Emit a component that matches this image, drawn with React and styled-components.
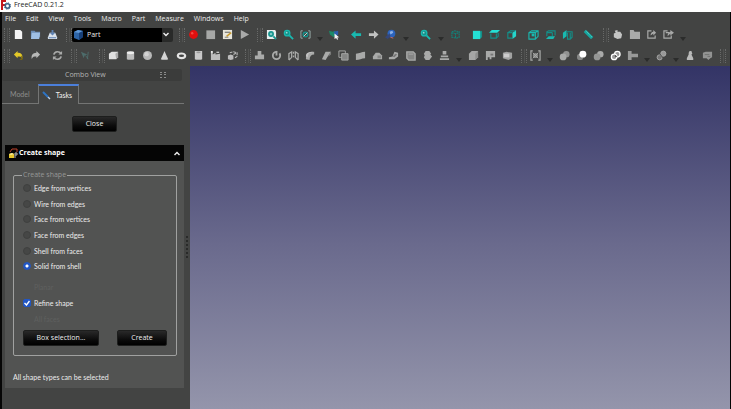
import React, { useState } from "react";
import styled, { createGlobalStyle, css } from "styled-components";

const Global = createGlobalStyle`
  * { box-sizing: border-box; }
  html, body, #root { height: 100%; }
  body {
    margin: 0;
    overflow: hidden;
    background: #000;
    color: #ececec;
    font-family: "Open Sans", "Noto Sans", sans-serif;
    font-size: 7px;
    line-height: 10px;
  }
  button, select, input { font: inherit; color: inherit; margin: 0; }
`;

const panelFont = css`
  font-family: Lato, "Open Sans", sans-serif;
`;

const Window = styled.div`
  display: flex;
  flex-direction: column;
  height: 100vh;
`;

const TitleBar = styled.header`
  display: flex;
  align-items: center;
  gap: 3px;
  height: 12px;
  background: #fff;
  color: #222;
  padding-bottom: 2px;
`;

const Frame = styled.div`
  flex: 1;
  min-height: 0;
  display: flex;
  flex-direction: column;
  border-left: 2px solid #060606;
  border-right: 1px solid #060606;
  background: #434443;
`;

const MenuBar = styled.nav`
  display: flex;
  gap: 10px;
  padding: 1px 3px 0;
  height: 12px;
`;

const MenuItem = styled.button`
  border: 0;
  padding: 0;
  background: none;
  line-height: 12px;
`;

const ToolBar = styled.div`
  display: flex;
  align-items: center;
  height: 21px;
  padding-left: 2px;
`;

const Handle = styled.span`
  flex: none;
  width: 6px;
  height: 14px;
  border: 0 dotted #686968;
  border-width: 0 1px;
  background: linear-gradient(#505150, #505150) center / 1px 100% no-repeat;
  background-clip: content-box;
  margin: 0;
`;

const Gap = styled.span`
  flex: none;
  width: ${(p) => p.$w}px;
`;

const Tool = styled.button`
  flex: none;
  display: grid;
  place-items: center;
  width: ${(p) => (p.$tight ? 16 : 17)}px;
  height: 17px;
  padding: 0;
  border: 0;
  background: none;
  svg { width: 11px; height: 11px; display: block; }
`;

const DropArrow = styled.button`
  flex: none;
  display: grid;
  place-items: end center;
  width: 12px;
  height: 12px;
  padding: 0;
  border: 0;
  background: none;
  svg { width: 6px; height: 4px; display: block; }
`;

const Workbench = styled.label`
  flex: none;
  display: flex;
  align-items: center;
  width: 101px;
  height: 14px;
  padding: 0 4px 0 2px;
  background: linear-gradient(90deg, #000 90px, #292a29 90px);
  border-radius: 2px;
  svg { flex: none; width: 10px; height: 10px; }
  svg:last-child { width: 6px; height: 5px; }
`;

const WorkbenchSelect = styled.select`
  flex: 1;
  min-width: 0;
  height: 14px;
  appearance: none;
  border: 0;
  padding: 0 3px;
  background: none;
  outline: none;
`;

const Main = styled.main`
  flex: 1;
  min-height: 0;
  display: flex;
`;

const SidePanel = styled.aside`
  flex: none;
  width: 182px;
  padding-top: 3px;
`;

const DockTitle = styled.div`
  display: flex;
  align-items: center;
  height: 12px;
  margin-right: 2px;
  padding: 0 16px 0 63px;
  justify-content: space-between;
  background: #3b3c3b;
  border-radius: 2px;
  color: #b4b5b4;
  svg { width: 6px; height: 6px; }
`;

const Tabs = styled.div`
  display: flex;
  height: 20px;
  margin-top: 3px;
  border-bottom: 1px solid #747574;
`;

const Tab = styled.button`
  && { ${panelFont} }
  display: flex;
  align-items: center;
  height: 19px;
  padding: 0 8px;
  border: 0;
  background: none;
  color: #8d8e8d;
  ${(p) =>
    p.$active &&
    css`
      height: 20px;
      padding: 0 6px 0 3px;
      gap: 5px;
      color: #f2f2f2;
      background: #434443;
      border: 1px solid #747574;
      border-top: 2px solid #4b7fdb;
      border-bottom: 0;
    `}
  svg { width: 9px; height: 9px; }
`;

const Button = styled.button`
  height: 16px;
  width: ${(p) => p.$width}px;
  padding: 0;
  border: 1px solid #1d1e1d;
  border-radius: 2px;
  background: linear-gradient(#292929, #0a0a0a 65%, #000);
  color: #efefef;
`;

const CloseRow = styled.div`
  display: flex;
  justify-content: center;
  padding: 12px 0 13px 3px;
`;

const TaskBox = styled.section`
  margin-left: 3px;
  background: #525352;
`;

const TaskHeader = styled.button`
  display: flex;
  align-items: center;
  gap: 1px;
  width: 100%;
  height: 16px;
  padding: 0 4px 0 3px;
  border: 0;
  background: #050505;
  color: #fff;
  && { font-weight: 700; }
  svg { width: 10px; height: 11px; }
  svg:last-child { width: 6px; height: 5px; margin-left: auto; }
`;

const TaskBody = styled.div`
  padding: 9px 7px 6px 8px;
`;

const Group = styled.fieldset`
  min-width: 0;
  margin: 0;
  padding: 0 8px 9px;
  border: 1px solid #a0a1a0;
  border-radius: 2px;
`;

const Legend = styled.legend`
  padding: 0 1px;
  color: #969796;
`;

const RadioList = styled.div`
  display: flex;
  flex-direction: column;
  justify-content: space-between;
  height: 94px;
`;

const Choice = styled.label`
  ${panelFont}
  display: flex;
  align-items: center;
  gap: 3px;
  height: 16px;
  padding-left: 1px;
`;

const inputBase = css`
  appearance: none;
  flex: none;
  width: 8px;
  height: 8px;
  background: #464746;
  border: 1px solid #3f403f;
`;

const Radio = styled.input.attrs({ type: "radio" })`
  ${inputBase}
  border-radius: 50%;
  &:checked {
    border-color: #2256c4;
    background: radial-gradient(circle, #fff 0 1px, #2256c4 2px);
  }
`;

const Check = styled.input.attrs({ type: "checkbox" })`
  ${inputBase}
  grid-area: 1 / 1;
  border-radius: 2px;
  &:checked {
    border-color: #2256c4;
    background: #2256c4;
  }
`;

const CheckMark = styled.span`
  display: grid;
  place-items: center;
  svg { grid-area: 1 / 1; width: 6px; height: 6px; pointer-events: none; }
`;

const Faint = styled.div`
  ${panelFont}
  padding: ${(p) => (p.$spaced ? "5px" : "0")} 0 0 12px;
  line-height: 16px;
  color: #5f605f;
`;

const ButtonRow = styled.div`
  display: flex;
  justify-content: space-between;
  margin: 3px 1px 0;
`;

const Status = styled.p`
  ${panelFont}
  margin: 16px 0 0;
`;

const Splitter = styled.div`
  flex: none;
  width: 6px;
  display: grid;
  place-items: center;
  svg { width: 3px; height: 24px; margin-top: 20px; }
`;

const Viewport = styled.section`
  flex: 1;
  min-width: 0;
  background: linear-gradient(#333466, #6a6a8d 52%, #9495ab);
`;

const T = "#18b9b0";
const G = "#a9aaa9";

const art = {
  page: <path fill="#f4f4f4" d="M2 1h6l2 2v8H2z" />,
  open: <><path fill="#6c8db5" d="M1 2h4l1 1h5v6H1z" /><path fill="#9fbfe4" d="M2 4h9l-1 7H1z" /></>,
  save: <><path fill="#dbe3ec" d="M3 4h6l2 5v2H1V9z" /><path fill="#5f83b4" d="M5 1h2v3h2L6 7 3 4h2zM2 9h8v1H2z" /></>,
  record: <><circle cx="6" cy="6" r="4.8" fill="#e00f0f" /><circle cx="4.6" cy="4.6" r="1.3" fill="#f14a42" /></>,
  stop: <path fill="#a7a8a7" d="M1.5 1.5h9.500v9.500h-9.500z" />,
  macro: <><path fill="#e8e6dc" d="M1 1h10v10H1z" /><path fill="#555" d="M3 3h6v1H3z" /><path stroke="#c99a2c" strokeWidth="1.6" d="M5 8l5-4" /><path stroke="#777" d="M3 9h4" /></>,
  play: <path fill={G} d="M2 1l9 5-9 5z" />,
  fitAll: <><path fill="#e8eeee" d="M1 1h9l1 2v8H1z" /><circle cx="5.500" cy="5.500" r="2.300" fill="#7fc9c5" stroke="#15958f" strokeWidth="1.8" /><path stroke="#15958f" strokeWidth="2" d="M8 8l3 3" /></>,
  zoom: <><circle cx="4.5" cy="4.5" r="3" fill="#168f8a" stroke={T} strokeWidth="1.4" /><path stroke={T} strokeWidth="2" d="M7 7l4 4" /><circle cx="4" cy="4" r="1" fill="#91dad5" /></>,
  draw: <><path fill="none" stroke="#9aaead" d="M3 2H1v8h2M9 2h2v8H9" /><circle cx="6" cy="6" r="2.500" fill="none" stroke="#168f8a" strokeWidth="1.500" /><path stroke="#d5dada" d="M4 8l4-4" /></>,
  select: <><path fill="#1b8a68" d="M0 2l4 1 3-1v4L5 9 1 6z" /><path fill="#2c5cad" d="M5 3l5-1v4L7 8z" /><path fill="#f1f1f1" d="M6 5l5 4-2 .2 1 2-1.2.5-1-2L6 11z" /></>,
  left: <path fill={T} d="M0 6l5-4.500v3h6v3H5v3z" />,
  right: <path fill="#c1c2c1" d="M11.500 6l-5-4.500v3H1v3h5.500v3z" />,
  link: <><circle cx="7" cy="5" r="4.300" fill="#2b63bd" /><path fill="#8bb0e8" d="M5 3l3-1 1 2-3 2z" /><path fill="#34477c" d="M0 9l5-4 1 3-3 3z" /><path stroke="#d36a61" d="M6 9l3 1" /></>,
  iso: <path fill="none" stroke="#138079" strokeWidth="1.2" strokeDasharray="2 .6" d="M2 3l3-1 5 1v6l-3 1-5-1zM2 4l4 1 4-1M6 5v5" />,
  front: <><path fill="#138f89" d="M8 3l3-1v7l-3 2z" /><path fill="#24e0d5" d="M1 2h8v9H1z" /></>,
  top: <><path fill="#24e0d5" d="M0 4l3-3h9L9 4z" /><path fill="none" stroke="#138f89" strokeWidth="1.2" d="M2 5v5h6V5M8 10l2-2V4" /></>,
  rightCube: <><path fill="#24d5cb" d="M7 4l4-3v7l-4 3z" /><path fill="none" stroke="#138f89" strokeWidth="1.2" d="M7 4H2v6h5M2 4l3-2h5" /></>,
  rear: <><path fill="none" stroke={T} strokeWidth="1.2" d="M1 4l3-2h7v6l-3 3H1zM1 4h7v7M8 4l3-2" /><path fill={T} d="M4 5h3v3H4z" /></>,
  bottom: <><path fill="none" stroke="#138f89" strokeWidth="1.2" d="M2 8V3l2-1h7v5M8 4v4M2 4h6" /><path fill={T} d="M1 11l3-3h7l-2 3z" /></>,
  leftCube: <><path fill={T} d="M1 4l4-3v7l-4 3z" /><path fill="none" stroke="#138f89" strokeWidth="1.2" d="M5 3h6v6l-2 2H6V4M9 4v6" /></>,
  measure: <><path stroke="#17a69f" strokeWidth="3.500" d="M2 2l8 8" /><path stroke="#6de0d8" strokeWidth="1" d="M3 2l7 7" strokeDasharray="1 1" /></>,
  part: <path fill="#c4c5c4" d="M3 2l3-1v2h3l2 3-1 4-4 1-4-2V5l2-1z" />,
  folder: <path fill={G} d="M1 1h4l1 2h6v8H1z" />,
  exportBox: <><path fill="none" stroke={G} strokeWidth="1.3" d="M6 2H2v8h8V7" /><path fill={G} d="M8 1l3 3-3 3V5L5 7c0-2 1-4 3-4z" /></>,
  exportAll: <><path fill="none" stroke={G} strokeWidth="1.3" d="M5 2H1v8h8V7M3 4h4" /><path fill={G} d="M8 1l4 3-4 3V5L5 8c0-3 1-4 3-5z" /></>,
  undo: <><path fill="#e3c828" d="M1 5l4-4v2c4 0 6 2 5 7C9 7 8 7 5 7v2z" /><path fill="#756612" d="M9 6l2 2-1 3H7l2-2z" /></>,
  redo: <path fill="#b7b8b7" d="M11 5L7 1v2C3 3 1 6 2 10c1-3 2-3 5-3v2z" />,
  refresh: <><path fill="none" stroke={G} strokeWidth="1.8" d="M2 5c1-4 6-4 8-1M10 7c-1 4-6 4-8 1" /><path fill={G} d="M11 1v4H7zM1 11V7h4z" /></>,
  pointer: <><path fill="#4d6c6b" d="M1 2l7 3-3 1-1 3z" /><path stroke="#4d6c6b" d="M6 6l3 4M9 2l-1 8" /></>,
  box: <><path fill="#e0e0e0" d="M1 4l3-2h7v6L9 10H1z" /><path fill="#aaa" d="M8 4l3-2v6l-2 2z" /></>,
  cylinder: <><path fill="#bcbcbc" d="M2 3h8v7c-1 1-7 1-8 0z" /><ellipse cx="6" cy="3" rx="4" ry="1.6" fill="#eee" /></>,
  sphere: <><circle cx="6" cy="6" r="4.9" fill="#b9b9b9" /><circle cx="5" cy="4.5" r="2.4" fill="#d4d4d4" /></>,
  cone: <path fill="#d4d4d4" d="M6 1l4 9c-1 1-7 1-8 0z" />,
  torus: <ellipse cx="6" cy="6.3" rx="4" ry="2.5" fill="none" stroke="#e4e4e4" strokeWidth="2.400" />,
  tube: <><path fill="#c8c8c8" d="M2 1h8v9c-1 1-7 1-8 0z" /><ellipse cx="6" cy="2.500" rx="2.4" ry="1" fill="#999" /></>,
  primitives: <><path fill="#bcbcbc" d="M1 11V2h2v3l3-2v2l5-1v7z" /><path fill="#eee" d="M1 1h2v2H1zM7 2h3v1H7z" /></>,
  builder: <><path fill="#bcbcbc" d="M1 6l3-1 3 1v4l-3 1-3-1z" /><path fill="none" stroke="#bcbcbc" strokeWidth="1.2" strokeDasharray="3 1" d="M3 3l4-1 4 1v4l-3 2M7 5l4-2" /></>,
  extrude: <path fill={G} d="M4 1h4v4h3v5H1V6h3z" />,
  revolve: <><circle cx="6" cy="6" r="4" fill="none" stroke={G} strokeWidth="2" strokeDasharray="19 3" /><path fill={G} d="M5 1h2v5H5z" /></>,
  mirror: <path fill="none" stroke={G} strokeWidth="1.4" d="M1 11V4l3-2v6l-3 3M11 11V4L8 2v6l3 3M6 2v2M6 6v2" />,
  fillet: <><path fill={G} d="M1 10c0-5 3-8 9-8v3C7 5 5 7 5 11z" /><path fill="#c3c3c3" d="M1 7c0-4 3-5 8-5L7 3C4 3 3 5 3 8z" /></>,
  chamfer: <><path fill={G} d="M1 10l4-8h6L8 6l-3 5z" /><path fill="#7b7c7b" d="M8 6l3-4v3l-3 2z" /></>,
  faceOf: <><path fill="none" stroke={G} d="M1 1h7v7H1z" /><path fill="#858685" stroke={G} d="M4 4h7v7H4z" /></>,
  ruled: <path fill={G} d="M1 4c4 0 6-2 10-2v7c-4 0-6 2-10 2z" />,
  loft: <><path fill={G} d="M1 10V7l3-4h4l3 3v4z" /><path fill="#858685" d="M6 6h4v3H6z" /></>,
  sweep: <><path fill={G} d="M1 8l4-1 2-5 4 1v4L7 10H1z" /><path fill="#777" d="M5 7l3-3 2 1-3 3z" /></>,
  section: <><path fill="#858685" stroke={G} strokeWidth="1.5" d="M2 2h7l2 2v7H4L2 9z" /><path fill={G} d="M4 4h5v1H4z" /></>,
  cross: <path fill={G} d="M4 1h4l2 3-1 1 2 2-3 4H4L2 8l1-2-1-2z" />,
  offset: <path fill={G} d="M4 1h4v4H4zM2 6h8v2H2zM1 9h10v2H1z" />,
  cube: <><path fill="#a5a6a5" d="M1 4l3-3h7v7l-3 3H1z" /><path fill="#8c8d8c" d="M8 4l3-3v7l-3 3z" /></>,
  project: <><path fill={G} d="M1 1h10v7H7v2H5V8H3v3H1z" /><path fill="#777" d="M6 4h3v2H6z" /></>,
  color: <><path fill="#a1a2a1" d="M1 3l4-1 6 1v6l-4 2-6-2z" /><path fill="#ccc" d="M2 4h6v4H2z" /></>,
  compound: <><path fill="none" stroke={G} strokeWidth="1.3" d="M3 1H1v10h2M9 1h2v10H9" /><circle cx="6" cy="6" r="2.8" fill="#8a8b8a" /><path stroke={G} d="M3 3l6 6M9 3L3 9" /></>,
  boolA: <><circle cx="8" cy="4.5" r="3.5" fill="#929392" /><circle cx="4.5" cy="7.5" r="3.7" fill={G} /></>,
  boolB: <><circle cx="4.5" cy="7.5" r="3.5" fill="#858685" /><circle cx="7.5" cy="4.5" r="3.8" fill="#fff" /></>,
  boolC: <><circle cx="8" cy="4.5" r="3.5" fill={G} /><circle cx="4.5" cy="7.5" r="3.7" fill="#959695" /></>,
  boolD: <><circle cx="8" cy="4.5" r="3" fill="#999" stroke="#fff" strokeWidth="1.400" /><circle cx="4.5" cy="7.5" r="3" fill="#999" stroke="#fff" strokeWidth="1.400" /><path fill="#444" d="M5 5l3 2-2 1z" /></>,
  join: <path fill="#999a99" d="M1 1h4v3h7v4H5v3H1z" />,
  split: <><circle cx="8" cy="4" r="2.8" fill="#999" stroke={G} /><circle cx="4" cy="8" r="2.8" fill="#777" stroke={G} /><path stroke="#444" d="M4 4l4 5" /></>,
  check: <path fill="#b9bab9" d="M5 1h2l1 3-1 1 2 4v2H2V9l2-4V3z" />,
  defeature: <><path fill="#929392" d="M1 3l3-1h7v6l-2 1-2 2-2-2H1z" /><path fill="none" stroke="#6d6e6d" d="M3 5h5M6 7h3" /></>,
};

const Icon = ({ name }) => (
  <svg viewBox="0 0 12 12" fill="none" aria-hidden="true">{art[name]}</svg>
);

const Chevron = ({ up }) => (
  <svg viewBox="0 0 6 5" fill="none" aria-hidden="true">
    <path stroke="#f0f0f0" strokeWidth="1.4" d={up ? "M.5 4L3 1.5 5.5 4" : "M.5 1L3 3.5 5.5 1"} />
  </svg>
);

const PartIcon = () => (
  <svg viewBox="0 0 10 10" aria-hidden="true">
    <path fill="#2d64a6" d="M0 2l4-2 5 1v6L5 10 0 8z" />
    <path fill="#5f97d6" d="M0 2l4-2 5 1-4 2z" />
    <path fill="#173f78" d="M5 3l4-2v6l-4 3z" />
  </svg>
);

// "|" handle, "v" drop arrow, numbers are gaps, a trailing "-" marks a tight slot
const Tools = ({ items }) =>
  items.map((it, i) => {
    if (it === "|") return <Handle key={i} />;
    if (it === "v")
      return (
        <DropArrow key={i} aria-label="More">
          <svg viewBox="0 0 6 4"><path fill="#2b2c2b" d="M0 0h6L3 4z" /></svg>
        </DropArrow>
      );
    if (typeof it === "number") return <Gap key={i} $w={it} />;
    const name = it.replace("-", "");
    return (
      <Tool key={i} $tight={it.endsWith("-")} aria-label={name}>
        <Icon name={name} />
      </Tool>
    );
  });

const fileTools = ["|", "page", "open", "save", 5, "|"];
const viewTools = [
  6, "|", "record", "stop", "macro", "play", 4, "|", "fitAll", "zoom", "draw", "v", "select", 5,
  "left", "right", "link", 1, "v", 5, "zoom", 1, "v", "iso", 5, "front", "top", "rightCube", 5,
  "rear", "bottom", "leftCube", 4, "measure", 6, "|", "part", "folder", "exportBox", "exportAll", "v",
];
const partTools = [
  "|", "undo", "redo", 5, "refresh", 5, "|", "pointer", 5, "|", "box", "cylinder", "sphere", "cone",
  "torus", "tube", "primitives", "builder", 4, "|", "extrude", "revolve", "mirror", "fillet-",
  "chamfer", "faceOf", "ruled", "loft-", "sweep", "section", "cross", "offset", "v", "cube",
  "project", "color", 5, "|", "compound", "v", "boolA", "boolB", "boolC", "boolD", "join", "v",
  "split", "v", "check", "defeature", 4, "|",
];

const menus = ["File", "Edit", "View", "Tools", "Macro", "Part", "Measure", "Windows", "Help"];
const shapes = [
  "Edge from vertices",
  "Wire from edges",
  "Face from vertices",
  "Face from edges",
  "Shell from faces",
  "Solid from shell",
];

export default function App() {
  const [shape, setShape] = useState("Solid from shell");
  const [refine, setRefine] = useState(true);
  return (
    <Window>
      <Global />
      <TitleBar>
        <svg width="11" height="10" viewBox="0 0 11 10" aria-hidden="true">
          <path fill="#c5161d" d="M1 0h5v2H3v2h2v2H3v4H1z" />
          <circle cx="7.5" cy="6" r="2.2" fill="none" stroke="#3c6287" strokeWidth="1.5" />
          <circle cx="7.5" cy="6" r="3.2" fill="none" stroke="#3c6287" strokeDasharray="1.3 1.2" />
        </svg>
        <span>FreeCAD 0.21.2</span>
      </TitleBar>
      <Frame>
        <MenuBar>
          {menus.map((m) => <MenuItem key={m}>{m}</MenuItem>)}
        </MenuBar>
        <ToolBar>
          <Tools items={fileTools} />
          <Workbench>
            <PartIcon />
            <WorkbenchSelect aria-label="Workbench"><option>Part</option></WorkbenchSelect>
            <Chevron />
          </Workbench>
          <Tools items={viewTools} />
        </ToolBar>
        <ToolBar>
          <Tools items={partTools} />
        </ToolBar>
        <Main>
          <SidePanel>
            <DockTitle>
              <span>Combo View</span>
              <svg viewBox="0 0 6 6" fill="none" aria-hidden="true">
                <path stroke="#8b8c8b" d="M0 .5h2M4 .5h2M0 2.5h2M4 2.5h2M0 5.5h2M4 5.5h2" />
              </svg>
            </DockTitle>
            <Tabs>
              <Tab>Model</Tab>
              <Tab $active>
                <svg viewBox="0 0 9 9" fill="none" aria-hidden="true">
                  <path stroke="#2d74c4" strokeWidth="2" d="M1 1l5 5" />
                  <path stroke="#b9d1ef" strokeWidth="1.5" d="M6 6l2 2" />
                </svg>
                Tasks
              </Tab>
            </Tabs>
            <CloseRow><Button $width={45}>Close</Button></CloseRow>
            <TaskBox>
              <TaskHeader>
                <svg viewBox="0 0 10 11" fill="none" aria-hidden="true">
                  <path stroke="#c2452e" d="M2 4l2-3h5v3" />
                  <path fill="#e6c62c" d="M1 6l3-1 2 1v4H1z" />
                  <path stroke="#b8b8b8" d="M7 10V5h2v2H7" />
                  <path fill="#f7eda0" d="M1 6l3-1 2 1-3 1z" />
                </svg>
                Create shape
                <Chevron up />
              </TaskHeader>
              <TaskBody>
                <Group>
                  <Legend>Create shape</Legend>
                  <RadioList>
                    {shapes.map((s) => (
                      <Choice key={s}>
                        <Radio name="shape" checked={shape === s} onChange={() => setShape(s)} />
                        {s}
                      </Choice>
                    ))}
                  </RadioList>
                  <Faint $spaced>Planar</Faint>
                  <Choice>
                    <CheckMark>
                      <Check checked={refine} onChange={() => setRefine(!refine)} />
                      {refine && (
                        <svg viewBox="0 0 6 6" fill="none" aria-hidden="true">
                          <path stroke="#fff" strokeWidth="1.4" d="M.5 3l2 2 3-4" />
                        </svg>
                      )}
                    </CheckMark>
                    Refine shape
                  </Choice>
                  <Faint>All faces</Faint>
                  <ButtonRow>
                    <Button $width={76}>Box selection...</Button>
                    <Button $width={50}>Create</Button>
                  </ButtonRow>
                </Group>
                <Status>All shape types can be selected</Status>
              </TaskBody>
            </TaskBox>
          </SidePanel>
          <Splitter>
            <svg viewBox="0 0 3 24" aria-hidden="true">
              <path stroke="#292a29" strokeWidth="2" strokeDasharray="2 2" d="M1 0v24" />
            </svg>
          </Splitter>
          <Viewport aria-label="3D view" />
        </Main>
      </Frame>
    </Window>
  );
}
